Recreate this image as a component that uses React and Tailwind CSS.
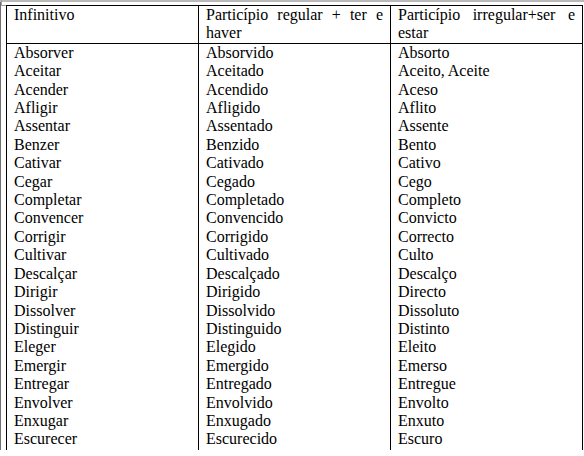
const rows = [
  ['Absorver', 'Absorvido', 'Absorto'],
  ['Aceitar', 'Aceitado', 'Aceito, Aceite'],
  ['Acender', 'Acendido', 'Aceso'],
  ['Afligir', 'Afligido', 'Aflito'],
  ['Assentar', 'Assentado', 'Assente'],
  ['Benzer', 'Benzido', 'Bento'],
  ['Cativar', 'Cativado', 'Cativo'],
  ['Cegar', 'Cegado', 'Cego'],
  ['Completar', 'Completado', 'Completo'],
  ['Convencer', 'Convencido', 'Convicto'],
  ['Corrigir', 'Corrigido', 'Correcto'],
  ['Cultivar', 'Cultivado', 'Culto'],
  ['Descalçar', 'Descalçado', 'Descalço'],
  ['Dirigir', 'Dirigido', 'Directo'],
  ['Dissolver', 'Dissolvido', 'Dissoluto'],
  ['Distinguir', 'Distinguido', 'Distinto'],
  ['Eleger', 'Elegido', 'Eleito'],
  ['Emergir', 'Emergido', 'Emerso'],
  ['Entregar', 'Entregado', 'Entregue'],
  ['Envolver', 'Envolvido', 'Envolto'],
  ['Enxugar', 'Enxugado', 'Enxuto'],
  ['Escurecer', 'Escurecido', 'Escuro'],
];

const widths = ['w-[192px] border-r', 'w-[192px] border-r', 'w-[191px]'];

export default function App() {
  return (
    <div className="relative w-[584px] h-[456px] bg-white text-black font-serif text-[16px] leading-[18.4px]">
      <div className="h-[2px] bg-[#b9b9b9]" />
      <div className="absolute left-[1px] top-0 w-[5px] h-[6px] border-l border-b border-[#a0a0a0]" />
      <div className="flex h-[448px] border-l border-[#6e6e6e] pt-[3px]">
        <div className="ml-[5px] w-[577px] border-l border-t border-r border-black flex flex-col [font-family:'Liberation_Serif','Times_New_Roman','DejaVu_Serif',serif]">
          <div className="flex border-b border-black">
            <div className={`${widths[0]} border-black px-[7px]`}>Infinitivo</div>
            <div className={`${widths[1]} border-black px-[7px] text-justify`}>
              Particípio regular + ter e haver
            </div>
            <div className={`${widths[2]} border-black px-[7px] text-justify`}>
              Particípio irregular+ser e estar
            </div>
          </div>
          <div className="flex flex-1">
            {[0, 1, 2].map((c) => (
              <div key={c} className={`${widths[c]} border-black px-[7px]`}>
                {rows.map((r) => (
                  <div key={r[0]}>{r[c]}</div>
                ))}
              </div>
            ))}
          </div>
        </div>
      </div>
    </div>
  );
}
